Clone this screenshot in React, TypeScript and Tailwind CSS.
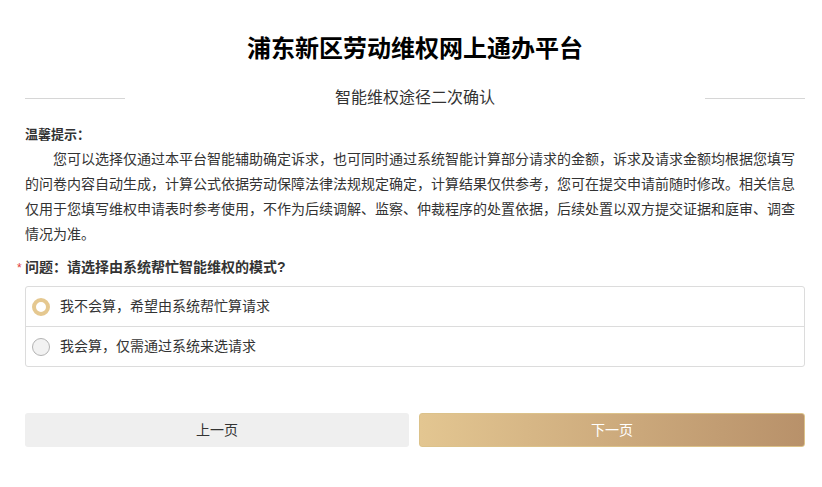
const font = "font-['Liberation_Sans','Noto_Sans_CJK_SC',sans-serif]";

// 温馨提示正文，按参考图逐行断开
const tipLines = [
  "您可以选择仅通过本平台智能辅助确定诉求，也可同时通过系统智能计算部分请求的金额，诉求及请求金额均根据您填写",
  "的问卷内容自动生成，计算公式依据劳动保障法律法规规定确定，计算结果仅供参考，您可在提交申请前随时修改。相关信息",
  "仅用于您填写维权申请表时参考使用，不作为后续调解、监察、仲裁程序的处置依据，后续处置以双方提交证据和庭审、调查",
  "情况为准。",
];

function Radio({ checked }: { checked: boolean }) {
  return checked ? (
    <span className="box-border h-[18px] w-[18px] shrink-0 rounded-full border-[4px] border-[#e5c890] bg-white" />
  ) : (
    <span className="box-border h-[18px] w-[18px] shrink-0 rounded-full border border-[#b3b3b3] bg-[#f2f2f2]" />
  );
}

export default function App() {
  const options = [
    { label: "我不会算，希望由系统帮忙算请求", checked: true },
    { label: "我会算，仅需通过系统来选请求", checked: false },
  ];

  return (
    <div className={`${font} h-[487px] w-[822px] overflow-hidden bg-white pl-[25px] pr-[17px] text-[#333]`}>
      <h1 className="pt-[34px] text-center text-[24px] font-bold leading-[30px] text-black">
        浦东新区劳动维权网上通办平台
      </h1>

      <div className="mt-[24px] flex items-center">
        <div className="h-px w-[100px] bg-[#d6d6d6]" />
        <div className="flex-1 text-center text-[16px] leading-[20px] text-[#333]">
          智能维权途径二次确认
        </div>
        <div className="h-px w-[100px] bg-[#d6d6d6]" />
      </div>

      <div className="mt-[17px] text-[13px] font-bold leading-[20px]">温馨提示：</div>
      <div className="mt-[2px] text-[14px] leading-[25px] text-[#333]">
        {tipLines.map((line, i) => (
          <div key={i} className={`whitespace-nowrap ${i === 0 ? "pl-[28px]" : ""}`}>
            {line}
          </div>
        ))}
      </div>

      <div className="relative mt-[10px] text-[14px] font-bold leading-[20px]">
        <span className="absolute -left-[8px] top-[1px] text-[12px] font-normal text-[#e03a3a]">*</span>
        问题：请选择由系统帮忙智能维权的模式?
      </div>

      <div className="mt-[9px] rounded-[3px] border border-[#dcdcdc]">
        {options.map((o, i) => (
          <div
            key={o.label}
            className={`flex items-center gap-[10px] px-[6px] text-[14px] ${i > 0 ? "h-[40px] border-t border-[#dcdcdc]" : "h-[39px]"}`}
          >
            <Radio checked={o.checked} />
            <span>{o.label}</span>
          </div>
        ))}
      </div>

      <div className="mt-[46px] flex gap-[10px]">
        <button className="h-[34px] flex-1 rounded-[3px] bg-[#efefef] text-[14px] text-[#333]">
          上一页
        </button>
        <button className="h-[34px] flex-1 rounded-[3px] border border-[#dcc28a] bg-gradient-to-r from-[#e3c691] to-[#b8916a] text-[14px] text-white">
          下一页
        </button>
      </div>
    </div>
  );
}
